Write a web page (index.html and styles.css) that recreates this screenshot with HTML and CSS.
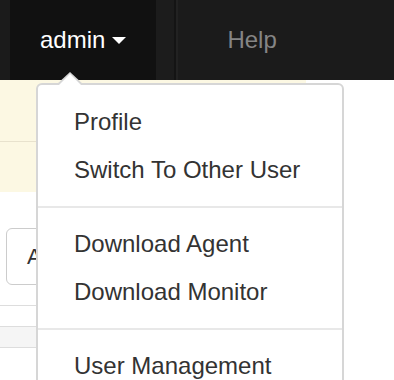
FILE: index.html
```html
<!DOCTYPE html>
<html lang="en">
<head>
  <meta charset="UTF-8">
  <title>Admin menu</title>
  <link rel="stylesheet" href="styles.css">
</head>
<body>

  <nav class="navbar">
    <div class="nav-edge"></div>
    <div class="nav-item nav-user">admin <span class="nav-caret"></span></div>
    <div class="nav-gap"></div>
    <div class="nav-divider"></div>
    <div class="nav-item nav-help">Help</div>
  </nav>

  <div class="content">
    <div class="notice">
      <div class="notice-row first"></div>
      <div class="notice-row"></div>
    </div>

    <button class="btn">Add</button>

    <div class="grid">
      <div class="grid-row"></div>
      <div class="grid-row shaded"></div>
    </div>
  </div>

  <ul class="dropdown">
    <li><a href="#">Profile</a></li>
    <li><a href="#">Switch To Other User</a></li>
    <li class="divider"></li>
    <li><a href="#">Download Agent</a></li>
    <li><a href="#">Download Monitor</a></li>
    <li class="divider"></li>
    <li><a href="#">User Management</a></li>
  </ul>

</body>
</html>
```

FILE: styles.css
```css
body {
  margin: 0;
  font-family: "Liberation Sans", Arial, sans-serif;
  color: #333;
  background-color: #fff;
}

.navbar {
  display: flex;
  height: 80px;
  background-color: #1b1b1b;
}
.nav-edge {
  width: 10px;
}
.nav-item {
  font-size: 24px;
  line-height: 80px;
}
.nav-user {
  display: flex;
  align-items: center;
  gap: 7px;
  padding: 0 30px;
  background-color: #111;
  color: #fff;
}
.nav-caret {
  width: 0;
  height: 0;
  border-left: 7px solid transparent;
  border-right: 7px solid transparent;
  border-top: 7px solid #fff;
  margin-top: 1px;
}
.nav-gap {
  width: 18px;
  background-color: #1c1c1c;
}
.nav-divider {
  width: 2px;
  background-color: #141414;
  border-right: 2px solid #222;
}
.nav-help {
  padding-left: 49px;
  color: #858585;
}

.notice {
  width: 306px;
  background-color: #fcf8e3;
}
.notice-row {
  height: 50px;
}
.notice-row.first {
  height: 61px;
  border-bottom: 1px solid #e8e2cd;
}

.btn {
  display: block;
  margin: 36px 0 0 6px;
  width: 140px;
  height: 57px;
  padding: 0 20px;
  text-align: left;
  font-family: inherit;
  font-size: 22px;
  color: #333;
  background-color: #fff;
  border: 1.5px solid #ccc;
  border-radius: 6px;
}

.grid {
  width: 330px;
  margin-top: 20px;
  border-top: 1px solid #ddd;
}
.grid-row {
  height: 20px;
  border-bottom: 1px solid #ddd;
}
.grid-row.shaded {
  background-color: #f5f5f5;
}

.dropdown {
  position: absolute;
  top: 83px;
  left: 36px;
  box-sizing: border-box;
  width: 308px;
  margin: 0;
  padding: 13px 0 12px;
  list-style: none;
  background-color: #fff;
  border: 2px solid #d6d6d6;
  border-radius: 6px;
}
.dropdown::before {
  content: "";
  position: absolute;
  top: -13px;
  left: 18px;
  border-left: 14px solid transparent;
  border-right: 14px solid transparent;
  border-bottom: 13px solid #d6d6d6;
}
.dropdown::after {
  content: "";
  position: absolute;
  top: -11px;
  left: 20px;
  border-left: 12px solid transparent;
  border-right: 12px solid transparent;
  border-bottom: 12px solid #fff;
}
.dropdown a {
  display: block;
  padding: 0 36px;
  font-size: 24px;
  line-height: 48px;
  color: #333;
  text-decoration: none;
}
.dropdown .divider {
  height: 2px;
  margin: 12px 0;
  background-color: #e8e8e8;
}
```
